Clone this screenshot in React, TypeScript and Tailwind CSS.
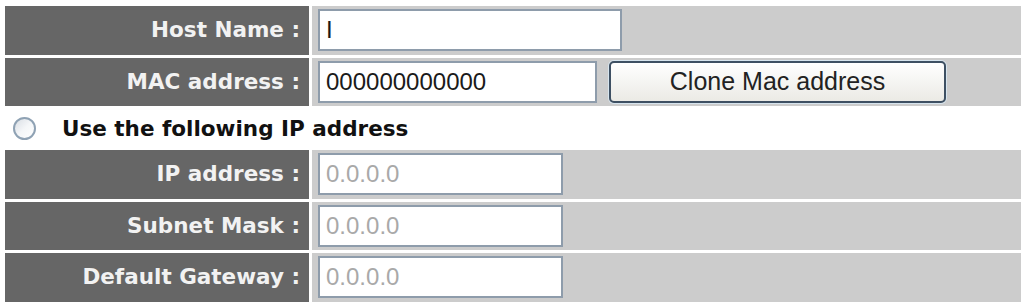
const labelFont = { fontFamily: '"DejaVu Sans", "Liberation Sans", sans-serif' };
const inputFont = { fontFamily: '"Liberation Sans", Arial, sans-serif' };

function Radio() {
  return (
    <div className="w-[23px] h-[23px] shrink-0 rounded-full border-2 border-[#8fa2b4] bg-gradient-to-br from-[#d9dee4] via-[#f4f6f8] to-white" />
  );
}

function RadioRow({ label }: { label: string }) {
  return (
    <div className="flex items-center h-[44px] pl-[13px]">
      <Radio />
      <span
        className="ml-[26px] text-[21.5px] font-bold text-[#111] leading-none pt-[2px]"
        style={labelFont}
      >
        {label}
      </span>
    </div>
  );
}

function Field({
  value,
  width,
  disabled,
}: {
  value: string;
  width: string;
  disabled?: boolean;
}) {
  return (
    <div
      className={`${width} h-[42px] flex items-center pl-[6px] bg-white border-2 border-[#8e9cab] text-[24px] leading-none ${
        disabled ? "text-[#a9a9a9]" : "text-[#1a1a1a]"
      }`}
      style={inputFont}
    >
      {value}
    </div>
  );
}

function Row({ label, children }: { label: string; children: React.ReactNode }) {
  return (
    <div className="flex h-[48.5px] gap-[3px]">
      <div
        className="w-[304px] bg-[#666666] flex items-center justify-end pr-[9px] text-[21.5px] font-bold text-[#f2f2f2]"
        style={labelFont}
      >
        {label}
      </div>
      <div className="flex-1 bg-[#cccccc] flex items-center pl-[6px] gap-[12px]">{children}</div>
    </div>
  );
}

export default function App() {
  return (
    <div className="w-[1023px] h-[304px] overflow-hidden bg-white pt-[6px]">
      <div className="pl-[5px] pr-[2px] flex flex-col gap-[3px]">
        <Row label="Host Name :">
          <Field value="I" width="w-[304px]" />
        </Row>
        <Row label="MAC address :">
          <Field value="000000000000" width="w-[279px]" />
          <button
            className="w-[337px] h-[42px] rounded-[5px] border-2 border-[#3e5063] bg-gradient-to-b from-white to-[#ebeae5] text-[25px] text-[#222] leading-none shadow-[0_0_0_1px_#d6e4ee]"
            style={inputFont}
          >
            Clone Mac address
          </button>
        </Row>
      </div>
      <RadioRow label="Use the following IP address" />
      <div className="pl-[5px] pr-[2px] flex flex-col gap-[3px]">
        <Row label="IP address :">
          <Field value="0.0.0.0" width="w-[245px]" disabled />
        </Row>
        <Row label="Subnet Mask :">
          <Field value="0.0.0.0" width="w-[245px]" disabled />
        </Row>
        <Row label="Default Gateway :">
          <Field value="0.0.0.0" width="w-[245px]" disabled />
        </Row>
      </div>
    </div>
  );
}
